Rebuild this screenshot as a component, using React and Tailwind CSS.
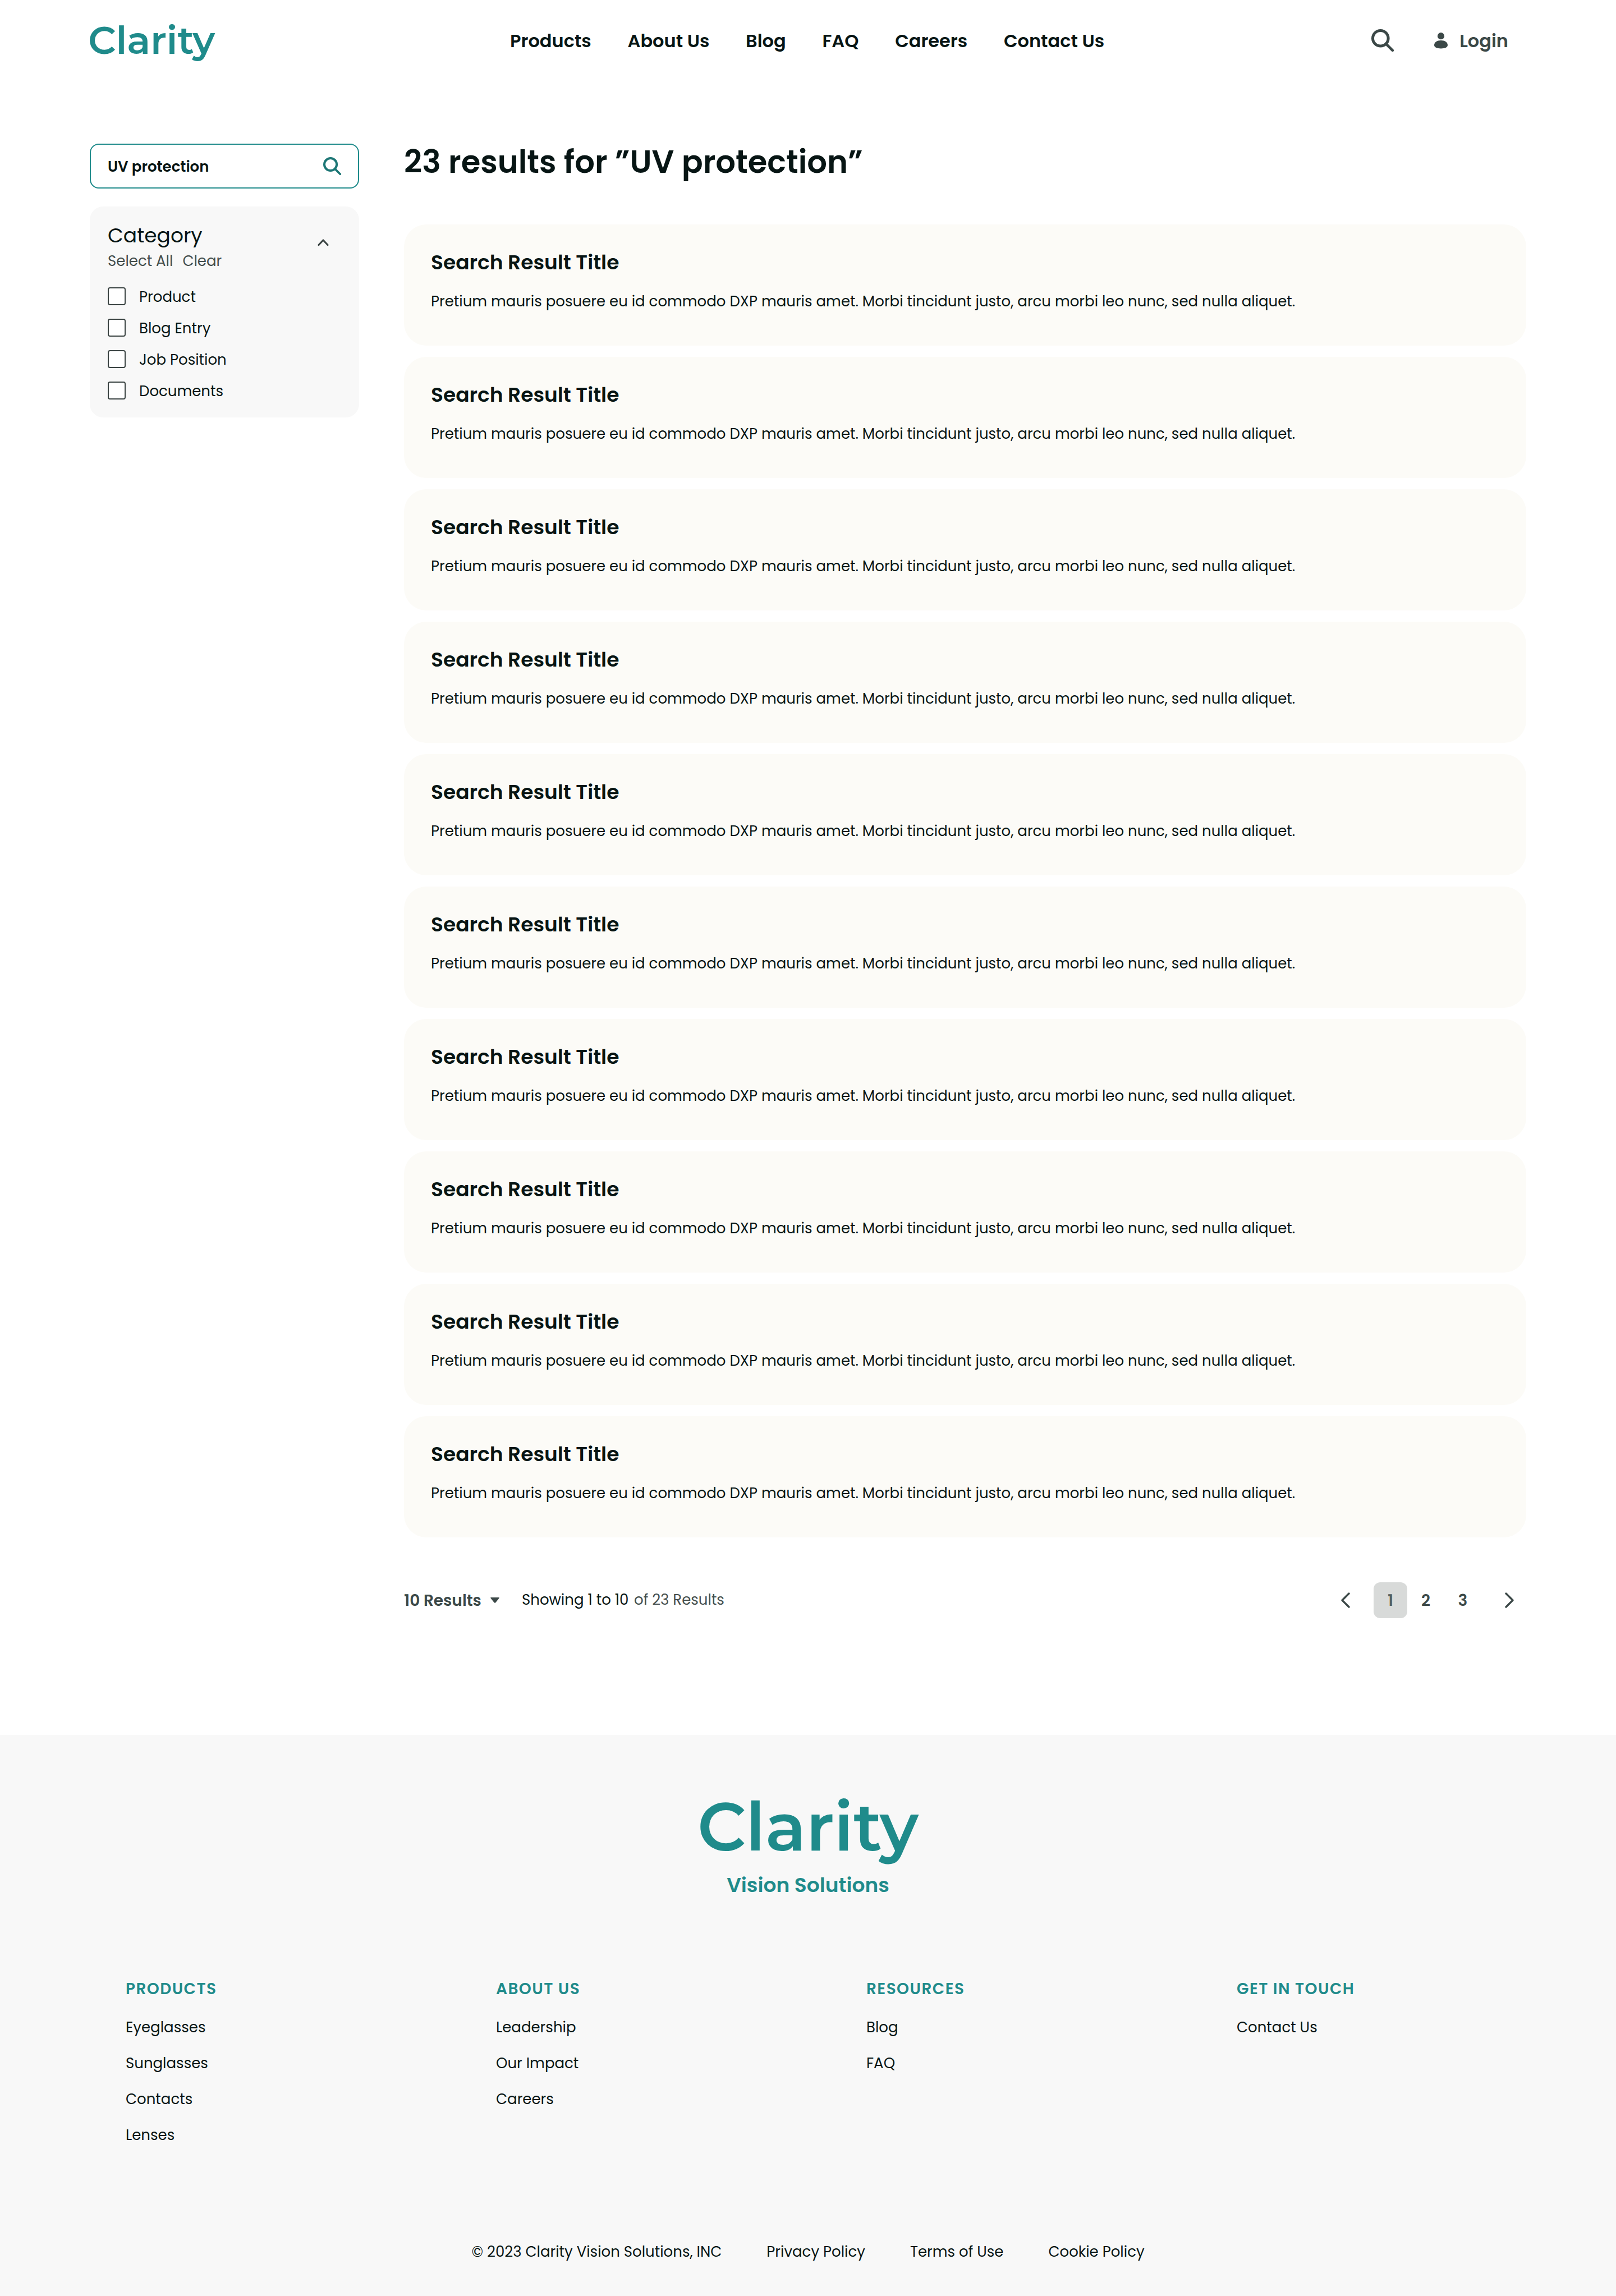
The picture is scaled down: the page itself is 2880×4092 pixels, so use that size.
const SANS = "font-['Poppins','Inter',sans-serif]";

const NAV = ["Products", "About Us", "Blog", "FAQ", "Careers", "Contact Us"];

const CATEGORIES = ["Product", "Blog Entry", "Job Position", "Documents"];

const COLUMNS = [
  { title: "PRODUCTS", links: ["Eyeglasses", "Sunglasses", "Contacts", "Lenses"] },
  { title: "ABOUT US", links: ["Leadership", "Our Impact", "Careers"] },
  { title: "RESOURCES", links: ["Blog", "FAQ"] },
  { title: "GET IN TOUCH", links: ["Contact Us"] },
];

const LEGAL = ["© 2023 Clarity Vision Solutions, INC", "Privacy Policy", "Terms of Use", "Cookie Policy"];

function SearchIcon({ className }) {
  return (
    <svg viewBox="0 0 40 40" fill="none" stroke="currentColor" className={className}>
      <circle cx="16.3" cy="16.3" r="13.8" strokeWidth="5" />
      <path d="M27 27 L37.8 37.8" strokeWidth="4.6" strokeLinecap="round" />
    </svg>
  );
}

function UserIcon() {
  return (
    <svg viewBox="0 0 24 29" fill="currentColor" className="h-[29px] w-6">
      <circle cx="12" cy="6.2" r="6.1" />
      <path d="M0 22.3C0 17.5 5.2 14.1 12 14.1S24 17.5 24 22.3C24 26.6 19 28.4 12 28.4S0 26.6 0 22.3Z" />
    </svg>
  );
}

function Chevron({ points, className, width = 3.4 }) {
  return (
    <svg fill="none" stroke="currentColor" strokeWidth={width} strokeLinecap="round" strokeLinejoin="round" className={className}>
      <polyline points={points} />
    </svg>
  );
}

function Header() {
  return (
    <header className="flex h-36 items-center pr-48 pl-40">
      <div className="w-[749px] pb-[2px]">
        <div className="-ml-[3px] font-['Montserrat','Lato',sans-serif] text-[69px] leading-[84px] font-semibold tracking-[-0.1px] text-[#1f8b8b]">Clarity</div>
      </div>
      <nav className="flex gap-[64.7px] pt-[2px] text-[32px] leading-[48px] font-semibold whitespace-nowrap">
        {NAV.map((n) => (
          <a key={n}>{n}</a>
        ))}
      </nav>
      <div className="ml-auto flex items-center text-[#3b4847]">
        <SearchIcon className="size-10" />
        <div className="ml-[72px]"><UserIcon /></div>
        <span className="ml-[21px] pt-[2px] text-[32px] leading-[48px] font-semibold">Login</span>
      </div>
    </header>
  );
}

function Sidebar() {
  return (
    <aside className="w-[480px] shrink-0">
      <div className="flex h-20 items-center justify-between rounded-2xl border-2 border-[#1f8b8b] px-[30px]">
        <span className="pt-[2px] text-[26px] leading-[40px] font-semibold">UV protection</span>
        <SearchIcon className="size-8 text-[#1c7675]" />
      </div>
      <section className="mt-8 h-[376px] rounded-[24px] bg-[#f8f8f8] px-8 pt-[25px]">
        <div className="flex justify-between">
          <div>
            <h2 className="text-[36px] leading-[54px]">Category</h2>
            <div className="flex gap-[17px] text-[26px] leading-[37px] text-[#444e4d]">
              <span>Select All</span>
              <span>Clear</span>
            </div>
          </div>
          <Chevron points="2,10.5 10,2 18,10.5" width={3.2} className="mt-[33px] mr-[22px] h-3 w-5 overflow-visible text-[#3b4443]" />
        </div>
        <ul className="mt-7 flex flex-col gap-6">
          {CATEGORIES.map((c) => (
            <li key={c} className="flex h-8 items-center gap-6">
              <span className="size-8 rounded-[4px] border-2 border-[#3b4443] bg-white" />
              <span className="pt-[2px] text-[26px] leading-[34px]">{c}</span>
            </li>
          ))}
        </ul>
      </section>
    </aside>
  );
}

function ResultCard() {
  return (
    <article className="h-[216px] rounded-[40px] bg-[#fcfbf7] px-12 pt-[41px]">
      <h3 className="text-[36px] leading-[54px] font-semibold">Search Result Title</h3>
      <p className="mt-[23px] text-[26px] leading-[39px] whitespace-nowrap">
        Pretium mauris posuere eu id commodo DXP mauris amet. Morbi tincidunt justo, arcu morbi leo nunc, sed nulla aliquet.
      </p>
    </article>
  );
}

function Pagination() {
  return (
    <div className="mt-20 flex h-16 items-center text-[28px] leading-[42px] font-semibold text-[#3b4847]">
      <span className="w-[154px] pt-[2px]">10 Results</span>
      <svg viewBox="0 0 16 10" className="h-2.5 w-4" fill="currentColor">
        <path d="M1.2 0H14.8Q16.6 0 15.4 1.4L9.4 9Q8 10.4 6.6 9L.6 1.4Q-.6 0 1.2 0Z" />
      </svg>
      <div className="ml-10 flex pb-px text-[26px] leading-[39px] font-normal whitespace-nowrap">
        <span className="w-[200px] text-[#071514]">Showing 1 to 10</span>
        <span className="text-[#444e4d]">of 23 Results</span>
      </div>
      <div className="ml-auto flex items-center pr-[22px] text-center leading-[66px]">
        <Chevron points="14,2 2,14 14,26" className="h-7 w-4" />
        <span className="ml-[42px] h-16 w-[60px] rounded-xl bg-[#d8dad9] text-[#52605f]">1</span>
        <span className="h-16 w-[66px]">2</span>
        <span className="h-16 w-[66px]">3</span>
        <Chevron points="2,2 14,14 2,26" className="ml-[42px] h-7 w-4" />
      </div>
    </div>
  );
}

function Footer() {
  return (
    <footer className="mt-[208px] h-[1000px] bg-[#f8f8f8] pt-[102px]">
      <div className="text-center text-[#1f8b8b]">
        <div className="font-['Montserrat','Lato',sans-serif] text-[120px] leading-[122px] font-semibold">Clarity</div>
        <div className="mt-[17px] text-[36px] leading-[54px] font-semibold">Vision Solutions</div>
      </div>
      <div className="mt-[137px] ml-56 grid h-[469px] grid-cols-[repeat(4,660px)] content-start overflow-hidden">
        {COLUMNS.map((col) => (
          <div key={col.title}>
            <h4 className="text-[28px] leading-[42px] font-semibold tracking-[0.05em] text-[#1f8b8b]">{col.title}</h4>
            <ul className="mt-[27px] flex flex-col gap-6 text-[26px] leading-[40px]">
              {col.links.map((l) => (
                <li key={l}>{l}</li>
              ))}
            </ul>
          </div>
        ))}
      </div>
      <div className="flex justify-center gap-20 text-[26px] leading-[40px] whitespace-nowrap">
        {LEGAL.map((l) => (
          <span key={l}>{l}</span>
        ))}
      </div>
    </footer>
  );
}

export default function App() {
  return (
    <div className={`w-[2880px] bg-white text-[#071514] ${SANS}`}>
      <Header />
      <main className="flex gap-20 px-40 pt-28">
        <Sidebar />
        <div className="w-[2000px]">
          <h1 className="pt-px text-[56px] leading-[64px] font-semibold">23 results for ”UV protection”</h1>
          <div className="mt-[79px] flex flex-col gap-5">
            {Array.from({ length: 10 }, (_, i) => (
              <ResultCard key={i} />
            ))}
          </div>
          <Pagination />
        </div>
      </main>
      <Footer />
    </div>
  );
}
